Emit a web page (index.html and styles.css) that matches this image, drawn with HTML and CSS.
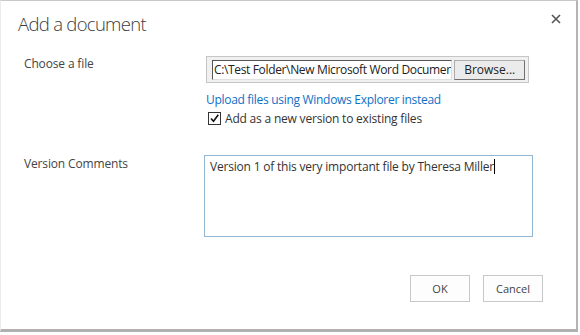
FILE: index.html
```html
<!DOCTYPE html>
<html>
<head>
<meta charset="utf-8">
<link rel="stylesheet" href="styles.css">
</head>
<body>
<div class="dialog">
  <div class="titlebar">
    <h1 class="title">Add a document</h1>
    <svg class="close" width="10" height="10" viewBox="0 0 10 10"><path d="M1 1 L9 9 M9 1 L1 9" stroke="#555" stroke-width="1.6" fill="none"/></svg>
  </div>
  <div class="row row-file">
    <div class="label">Choose a file</div>
    <div class="field">
      <div class="filebox">
        <div class="filepath">C:\Test Folder\New Microsoft Word Documer</div>
        <div class="browse">Browse...</div>
      </div>
      <a class="link">Upload files using Windows Explorer instead</a>
      <label class="check"><span class="box"><svg width="11" height="11" viewBox="0 0 11 11"><path d="M2 5.5 L4.5 8.3 L9.3 1.8" fill="none" stroke="#111" stroke-width="1.6"/></svg></span>Add as a new version to existing files</label>
    </div>
  </div>
  <div class="row row-comments">
    <div class="label">Version Comments</div>
    <div class="textarea">Version 1 of this very important file by Theresa Miller<span class="caret"></span></div>
  </div>
  <div class="buttons">
    <div class="btn">OK</div>
    <div class="btn">Cancel</div>
  </div>
</div>
</body>
</html>
```
FILE: styles.css
```css
html, body {
  margin: 0;
  padding: 0;
  background: #fff;
}
body {
  width: 580px;
  height: 335px;
  overflow: hidden;
  font-family: "Open Sans", "Noto Sans", sans-serif;
  color: #444;
}
.dialog {
  box-sizing: border-box;
  width: 578px;
  height: 332px;
  border-top: 1px solid #c8c8c8;
  border-left: 1px solid #ececec;
  border-right: 2px solid #b4b4b4;
  border-bottom: 3px solid #b0b0b0;
  background: #fff;
  padding-left: 17px;
}
.titlebar {
  display: flex;
  justify-content: space-between;
  align-items: flex-start;
  height: 55px;
}
.title {
  margin: 10px 0 0 0;
  font-weight: 300;
  font-size: 18.5px;
  color: #3c3c3c;
  letter-spacing: -0.7px;
}
.close {
  margin: 13px 15px 0 0;
}
.row {
  display: flex;
  padding-left: 6px;
}
.label {
  width: 182px;
  font-size: 12px;
  color: #444;
  letter-spacing: -0.15px;
}
.row-file .label {
  margin-top: -1px;
}
.field {
  display: flex;
  flex-direction: column;
}
.filebox {
  width: 323px;
  height: 27px;
  box-sizing: border-box;
  border: 1px solid #c6c6c6;
  background: #f0f0f0;
  display: flex;
  align-items: center;
  padding: 0 3px 0 5px;
  gap: 2px;
}
.filepath {
  width: 242px;
  height: 20px;
  box-sizing: border-box;
  border-top: 1px solid #555;
  border-left: 1px solid #555;
  border-right: 1px solid #e0e0e0;
  border-bottom: 1px solid #e0e0e0;
  background: #fff;
  font-size: 12px;
  line-height: 18px;
  color: #222;
  padding-left: 1px;
  white-space: nowrap;
  overflow: hidden;
  letter-spacing: -0.35px;
}
.browse {
  width: 71px;
  height: 20px;
  box-sizing: border-box;
  border: 1px solid #adadad;
  border-right-color: #707070;
  border-bottom-color: #707070;
  background: #ebebeb;
  font-size: 12px;
  line-height: 18px;
  text-align: center;
  color: #222;
}
.link {
  margin-top: 8px;
  font-size: 12px;
  color: #0f6fc6;
  letter-spacing: -0.3px;
}
.check {
  display: flex;
  align-items: center;
  margin-top: 2px;
  margin-left: 2px;
  font-size: 12px;
  color: #333;
  letter-spacing: -0.2px;
}
.box {
  width: 11px;
  height: 11px;
  border: 1px solid #333;
  margin-right: 4px;
  display: flex;
  background: #fff;
}
.row-comments {
  margin-top: 28px;
}
.row-comments .label {
  margin-top: 0px;
  width: 180px;
}
.textarea {
  width: 329px;
  height: 82px;
  box-sizing: border-box;
  border: 1px solid #8fb8d2;
  padding: 2px 5px;
  font-size: 12px;
  color: #333;
  letter-spacing: -0.2px;
}
.caret {
  display: inline-block;
  width: 1px;
  height: 15px;
  background: #000;
  vertical-align: -3px;
}
.buttons {
  display: flex;
  justify-content: flex-end;
  gap: 13px;
  margin-top: 38px;
  padding-right: 33px;
}
.btn {
  width: 60px;
  height: 27px;
  box-sizing: border-box;
  border: 1px solid #c8c8c8;
  background: #fdfdfd;
  font-size: 11px;
  line-height: 25px;
  text-align: center;
  color: #444;
}
```
